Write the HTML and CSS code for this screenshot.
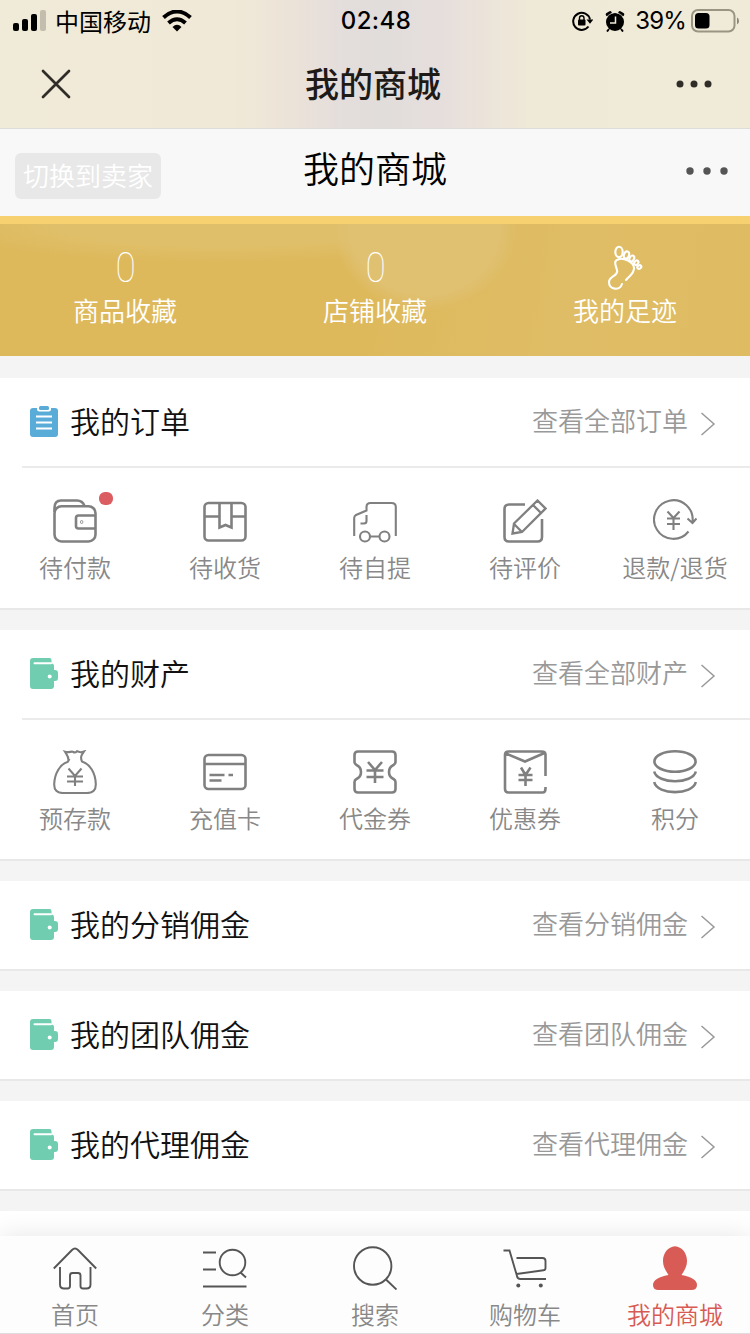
FILE: index.html
```html
<!DOCTYPE html>
<html lang="zh-CN">
<head>
<meta charset="utf-8">
<title>我的商城</title>
<link rel="stylesheet" href="styles.css">
</head>
<body>
<svg class="defs" width="0" height="0">
  <symbol id="wallet" viewBox="0 0 28 31">
    <path fill="#70cdb0" d="M3 0H19.500Q21.500 0 21.500 2V5.500Q24 5.500 24 8V12H25Q28 12 28 15V20Q28 23 25 23H24V28Q24 31 21 31H3Q0 31 0 28V3Q0 0 3 0Z"/>
    <path stroke="#fff" stroke-width="2" stroke-linecap="round" d="M4.500 5.200H21"/>
    <circle cx="19.700" cy="18.500" r="2" fill="#fff"/>
  </symbol>
  <symbol id="chevron" viewBox="0 0 16 24"><path d="M1.500 1 14 12 1.500 23" fill="none" stroke="#999" stroke-width="1.500"/></symbol>
</svg>

<div class="top">
  <div class="status">
    <div class="carrier">
      <svg width="34" height="22" viewBox="0 0 34 22"><rect x="1" y="13" width="6" height="8" rx="2"/><rect x="10" y="9" width="6" height="12" rx="2"/><rect x="19" y="4" width="6" height="17" rx="2"/><rect x="28" y="0" width="6" height="21" rx="2" fill="#c3bdad"/></svg>
      <span class="operator">中国移动</span>
      <svg width="30" height="22" viewBox="0 0 30 22"><path d="M1.500 7.500Q15-4.500 28.500 7.500" fill="none" stroke="#000" stroke-width="4"/><path d="M6.500 13Q15 5.500 23.500 13" fill="none" stroke="#000" stroke-width="4"/><path d="M10.500 17Q15 12.500 19.500 17L15 21.500Z"/></svg>
    </div>
    <div class="clock">02:48</div>
    <div class="power">
      <svg width="21" height="20" viewBox="0 0 21 20"><path d="M16.500 15.500A8.500 8.500 0 1 1 18 8.500" fill="none" stroke="#000" stroke-width="2"/><path d="M14.500 8.500H21.300L18 12.800Z"/><rect x="6" y="8.500" width="7.500" height="6" rx="1"/><path d="M7.500 9V7A2.200 2.200 0 0 1 12 7V9" fill="none" stroke="#000" stroke-width="1.400"/></svg>
      <svg class="alarm" width="20" height="21" viewBox="0 0 20 21"><circle cx="10" cy="11" r="9"/><path d="M2.500 3.500 5 1.800M15 1.800 17.500 3.500" stroke="#000" stroke-width="3.400" stroke-linecap="round"/><path d="M1 6.500Q4 3 8 1.700M19 6.500Q16 3 12 1.700" fill="none" stroke="#f0ead8" stroke-width=".7"/><path d="M4 18 2 20.500M16 18 18 20.500" stroke="#000" stroke-width="2"/><path d="M10.500 5.500V12H5" fill="none" stroke="#f0ead8" stroke-width="1.500"/></svg>
      <span class="percent">39%</span>
      <svg width="49" height="24" viewBox="0 0 49 24"><rect x="1" y="1" width="42.500" height="21.500" rx="6" fill="none" stroke="#9a9482" stroke-width="2"/><rect x="4" y="4" width="14.500" height="15.500" rx="3.500"/><path d="M46 8.500Q48 9 48 12T46 15.500Z" fill="#8b8678"/></svg>
    </div>
  </div>
  <div class="appbar">
    <svg class="close" width="30" height="30" viewBox="0 0 30 30"><path d="M2 2 28 28M28 2 2 28" stroke="#302d28" stroke-width="2.700" stroke-linecap="round"/></svg>
    <div class="app-title">我的商城</div>
    <svg class="app-more" width="36" height="8" viewBox="0 0 36 8"><g fill="#302d28"><circle cx="4" cy="4" r="3.500"/><circle cx="18" cy="4" r="3.500"/><circle cx="32" cy="4" r="3.500"/></g></svg>
  </div>
</div>

<header class="head">
  <div class="switch">切换到卖家</div>
  <div class="title">我的商城</div>
  <svg class="more" width="42" height="8" viewBox="0 0 42 8"><g fill="#555"><circle cx="4" cy="4" r="3.700"/><circle cx="21" cy="4" r="3.700"/><circle cx="38" cy="4" r="3.700"/></g></svg>
</header>

<div class="stats">
  <div class="stat"><span class="num">0</span><span class="name">商品收藏</span></div>
  <div class="stat"><span class="num">0</span><span class="name">店铺收藏</span></div>
  <div class="stat">
    <span class="pic"><svg width="36" height="46" viewBox="0 0 36 46"><g fill="none" stroke="#fff" stroke-width="2.100" stroke-linecap="round"><ellipse cx="12" cy="7" rx="3.700" ry="5.200"/><ellipse cx="19.500" cy="10" rx="2.500" ry="3.700" transform="rotate(18 19.500 10)"/><ellipse cx="24.800" cy="13.500" rx="2.200" ry="3.100" transform="rotate(28 24.800 13.500)"/><ellipse cx="29.300" cy="17.700" rx="1.900" ry="2.400" transform="rotate(40 29.300 17.700)"/><ellipse cx="32.300" cy="22" rx="1.700" ry="2.100" transform="rotate(55 32.300 22)"/><path d="M15 39C13 46 2 45 2 37C2 31 12 31 10 25C9 21 6 16 11 14.500C16 12 27 17 27 23C27 29 23 30 19 35"/></g></svg></span>
    <span class="name">我的足迹</span>
  </div>
</div>

<section class="card">
  <div class="row">
    <svg class="lead" width="28" height="31" viewBox="0 0 28 31"><rect y="2" width="28" height="29" rx="3" fill="#5aacd8"/><path d="M7 0V3Q7 5.500 9.500 5.500H18.500Q21 5.500 21 3V0" fill="#fff"/><rect x="9" y="0" width="10" height="4" rx="1.500" fill="#5aacd8"/><path d="M6 10.500H22M6 16.500H22M6 22.500H22" stroke="#fff" stroke-width="2"/></svg>
    <span class="label">我的订单</span><span class="link">查看全部订单</span><svg class="chev"><use href="#chevron"/></svg>
  </div>
  <div class="grid orders">
    <div class="cell"><span class="badged"><svg class="icon" viewBox="0 0 44 44"><path d="M1.500 13V9Q1.500 1.500 8 1.500H24Q29.500 1.500 31.500 7"/><rect x="1.500" y="7.200" width="41" height="35.300" rx="7"/><path d="M42.500 16.500H25.500Q23 16.500 23 19V27Q23 29.500 25.500 29.500H42.500"/><circle cx="28.700" cy="23" r=".4"/></svg><i class="dot"></i></span>待付款</div>
    <div class="cell"><svg class="icon" viewBox="0 0 44 44"><rect x="1.500" y="4" width="41" height="37.500" rx="4"/><path d="M2 17.500H16.500M28.500 17.500H42M16.500 4V28.500L22.500 26 28.500 28.500V4"/></svg>待收货</div>
    <div class="cell"><svg class="icon thin" viewBox="0 0 44 44"><path d="M1.200 37V19Q1.200 17 3 16L13.500 11.500V8Q13.500 4 17.500 4H38.500Q42.800 4 42.800 8V37M13.500 16V22Q13.500 24.500 11 24.500H7.500M17 37.500H26.500"/><circle cx="12" cy="37.500" r="5"/><circle cx="31.500" cy="37.500" r="5"/></svg>待自提</div>
    <div class="cell"><svg class="icon" viewBox="0 0 44 44"><path d="M22 5.500H6Q1.500 5.500 1.500 10V38Q1.500 42.500 6 42.500H34.500Q39 42.500 39 38V20"/><path d="M9.500 34.500 11 24.500 34.500 1.500 42.500 9.500 19 33ZM30 6 38 14M11 25 19 33" stroke-width="2.300"/></svg>待评价</div>
    <div class="cell"><svg class="icon thin" viewBox="0 0 44 44"><path d="M35.500 32.500A19.300 19.300 0 1 1 39.500 23M34.500 19.500 39.500 24 43.500 19.500M14.500 12.500 20.500 19 26.500 12.500M20.500 19V31M14 19.500H27M14 25H27"/></svg>退款/退货</div>
  </div>
</section>

<section class="card">
  <div class="row"><svg class="lead"><use href="#wallet"/></svg><span class="label">我的财产</span><span class="link">查看全部财产</span><svg class="chev"><use href="#chevron"/></svg></div>
  <div class="grid assets">
    <div class="cell"><svg class="icon thin" viewBox="0 0 44 44"><path d="M15.500 11C16 7 14 5 12 1.800C16 3 18 1 20 1.800Q22 3.300 24 1.200Q27 3 31 1.500C28.500 5 27 7 29 11.500C37 14 42.500 23 42.800 34Q43 43 34 43H10Q1 43 1.200 34C1.500 24 7 14 14.500 12L16.500 9M15.500 18.500 22 26 28.500 18.500M22 26V36M14 26.500H30M14 31.500H30"/></svg>预存款</div>
    <div class="cell"><svg class="icon" viewBox="0 0 44 44"><rect x="1.500" y="5" width="41" height="34" rx="4"/><path d="M2 14H42M6.500 25H21.500M25.500 25H30M6.500 30.500H18.500"/></svg>充值卡</div>
    <div class="cell"><svg class="icon" viewBox="0 0 44 44"><path d="M5 1.500H39Q42.500 1.500 42.500 5V12Q42.500 14 40.500 15Q36 17 36 22T40.500 29Q42.500 30 42.500 32V39Q42.500 42.500 39 42.500H5Q1.500 42.500 1.500 39V32Q1.500 30 3.500 29Q8 27 8 22T3.500 15Q1.500 14 1.500 12V5Q1.500 1.500 5 1.500ZM15 12 22 20 29 12M22 20V33M13.500 20.500H30.500M13.500 27H30.500"/></svg>代金券</div>
    <div class="cell"><svg class="icon" viewBox="0 0 44 44"><path d="M42.500 26V4.500Q42.500 1.500 39 1.500H5.500Q2 1.500 2 4.500V39Q2 42.500 5.500 42.500H39.500Q42.500 42.500 42.500 38.500V37M3 3.500 22 11.500 41.500 3M18 17.500 22.500 25 27.500 17.500M22.500 25V36M15.500 25H29.500M15.500 30H29.500"/></svg>优惠券</div>
    <div class="cell"><svg class="icon" viewBox="0 0 44 44"><ellipse cx="22" cy="11.500" rx="20.600" ry="10.200"/><path d="M1.200 21.500C4 34.500 40 34.500 42.800 21.500M1.200 32C4 45.500 40 45.500 42.800 32"/></svg>积分</div>
  </div>
</section>

<section class="card"><div class="row"><svg class="lead"><use href="#wallet"/></svg><span class="label">我的分销佣金</span><span class="link">查看分销佣金</span><svg class="chev"><use href="#chevron"/></svg></div></section>
<section class="card"><div class="row"><svg class="lead"><use href="#wallet"/></svg><span class="label">我的团队佣金</span><span class="link">查看团队佣金</span><svg class="chev"><use href="#chevron"/></svg></div></section>
<section class="card"><div class="row"><svg class="lead"><use href="#wallet"/></svg><span class="label">我的代理佣金</span><span class="link">查看代理佣金</span><svg class="chev"><use href="#chevron"/></svg></div></section>
<section class="card next"></section>

<nav class="tabs">
  <div class="cell"><svg class="icon" viewBox="0 0 44 44"><path d="M.8 22.500 19 4Q22 1 25 4L43.200 22.500M7 21V38.500Q7 42.500 11 42.500H14.500Q17 42.500 17 40V29.500Q17 27 19.500 27H25Q27.500 27 27.500 29.500V40Q27.500 42.500 30 42.500H33.500Q37.500 42.500 37.500 38.500V21"/></svg>首页</div>
  <div class="cell"><svg class="icon" viewBox="0 0 44 44"><path d="M0 6.500H13M0 23.500H13M0 40.500H43.500M37.500 26.500 43 31.500"/><circle cx="29.500" cy="16.500" r="12.800"/></svg>分类</div>
  <div class="cell"><svg class="icon" viewBox="0 0 44 44"><circle cx="19.700" cy="20" r="18.700"/><path d="M33 33.500 43.500 43.500"/></svg>搜索</div>
  <div class="cell"><svg class="icon" viewBox="0 0 44 44"><path d="M.5 4.500H6.500L14 30Q14.500 33 17.500 33H43M13.500 12H39.500Q42.500 12 42.500 15V22Q42.500 24 40.500 24.300L13.500 28"/><circle cx="15.300" cy="39.500" r="2" class="solid"/><circle cx="37.800" cy="39.500" r="2" class="solid"/></svg>购物车</div>
  <div class="cell on"><svg class="icon" viewBox="0 0 44 44"><path d="M22 .3C29 1 34 7 34 15C34 21 31 25 28.500 29Q44 32 44 39Q44 44 38.500 44H5.500Q0 44 0 39Q0 32 15.500 29C13 25 10 21 10 15C10 7 15 1 22 .3Z"/></svg>我的商城</div>
</nav>
</body>
</html>
```
FILE: styles.css
```css
* { box-sizing: border-box; }
body {
  margin: 0;
  width: 750px;
  height: 1334px;
  overflow: hidden;
  background: #f4f4f4;
  font-family: "Noto Sans CJK SC", sans-serif;
  font-weight: 350;
  color: #111;
}
svg { display: block; flex: none; }
.defs { position: absolute; }

.top {
  height: 129px;
  border-bottom: 1px solid #dcdcd8;
  background: linear-gradient(90deg, #f0ead8 0, #f0e9d7 230px, #ece3d8 290px, #e3dddc 345px, #e1dddb 385px, #e6dedc 440px, #ebe3da 480px, #efe9d8 530px, #f0ead8 100%);
}
.status {
  display: grid;
  grid-template-columns: 1fr auto 1fr;
  height: 40px;
  padding: 0 10px 0 12px;
  align-items: center;
  color: #000;
}
.carrier, .power { display: flex; align-items: center; }
.operator { margin: 0 11px 0 9px; font-size: 24px; line-height: 38px; font-weight: 400; }
.clock { font: 500 24px/40px Inter, sans-serif; letter-spacing: .4px; }
.power { justify-content: flex-end; }
.alarm { margin: 0 10px 0 12px; }
.percent { margin-right: 5px; font: 400 24px/42px Inter, sans-serif; letter-spacing: -.8px; }
.appbar {
  display: grid;
  grid-template-columns: 1fr auto 1fr;
  align-items: center;
  height: 88px;
  padding: 0 38px 0 41px;
}
.app-title { margin: 0 7px 2px 0; font-size: 34px; font-weight: 500; color: #1d1a17; line-height: 48px; }
.app-more { justify-self: end; }

.head {
  display: grid;
  grid-template-columns: 1fr auto 1fr;
  height: 87px;
  padding: 0 22px 0 15px;
  background: #f8f8f8;
}
.switch {
  justify-self: start;
  width: 146px;
  height: 46px;
  margin-top: 24px;
  border-radius: 6px;
  background: #e8e8e8;
  color: #fff;
  font-size: 26px;
  line-height: 43px;
  text-align: center;
}
.title { margin-left: 7px; font-size: 36px; line-height: 77px; font-weight: 350; color: #000; }
.more { justify-self: end; margin-top: 38px; }

.stats {
  display: grid;
  grid-template-columns: repeat(3, 1fr);
  height: 140px;
  border-top: 8px solid #f7d070;
  background:
    radial-gradient(ellipse 92px 82px at 425px 5px, #e0c172 80%, #e0c17200 100%),
    radial-gradient(ellipse 280px 38px at 220px 0, #dfbf69 60%, #dfbf6900 100%),
    linear-gradient(100deg, #deb95c 50%, #dfbd66 75%, #dfbc62 100%);
  color: #fff;
}
.stat { display: flex; flex-direction: column; align-items: center; padding-top: 20px; }
.num { font: 100 42px/48px Roboto, sans-serif; transform: scaleX(.88); }
.stat .pic { height: 48px; padding-top: 1px; }
.name { font-size: 26px; line-height: 36px; }

.card { margin-top: 20px; background: #fff; border-bottom: 2px solid #e8e8e8; }
.stats + .card { margin-top: 22px; }
.row { display: flex; align-items: center; height: 88px; padding: 0 34px 0 30px; }
.lead { width: 28px; height: 31px; margin: 0 12px 1px 0; }
.label { flex: 1; padding-bottom: 4px; font-size: 30px; line-height: 44px; color: #111; }
.link { padding-bottom: 4px; font-size: 26px; line-height: 40px; color: #999; }
.chev { width: 16px; height: 24px; margin: 3px 0 0 12px; }
.next { height: 60px; }

.grid { display: grid; grid-template-columns: repeat(5, 1fr); position: relative; }
.grid::before { content: ""; position: absolute; left: 22px; right: 0; top: 0; height: 2px; background: #ebebeb; }
.orders { height: 142px; padding-top: 33px; }
.assets { height: 141px; padding-top: 32px; }
.cell {
  display: flex;
  flex-direction: column;
  align-items: center;
  font-size: 24px;
  line-height: 36px;
  color: #888;
  white-space: nowrap;
}
.icon {
  width: 44px;
  height: 44px;
  margin-bottom: 6px;
  fill: none;
  stroke: #808080;
  stroke-width: 2.6;
}
.thin { stroke-width: 2.1; }
.badged { position: relative; }
.dot { position: absolute; right: -16px; top: -7px; width: 14px; height: 13px; border-radius: 6px; background: #db5c61; }

.tabs {
  position: absolute;
  left: 0;
  top: 1236px;
  display: grid;
  grid-template-columns: repeat(5, 1fr);
  width: 750px;
  height: 98px;
  padding-top: 10px;
  border-bottom: 1px solid #ddd;
  background: #fdfdfd;
  box-shadow: 0 0 24px rgba(0, 0, 0, .1);
}
.tabs .icon { stroke: #555; stroke-width: 1.9; }
.tabs .solid { fill: #555; stroke: none; }
.tabs .on { color: #d85a54; }
.tabs .on .icon { fill: #d95b55; stroke: none; }
```
